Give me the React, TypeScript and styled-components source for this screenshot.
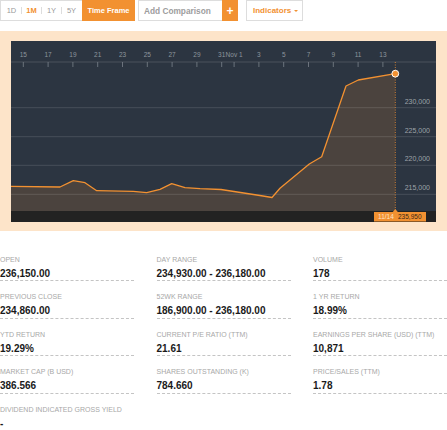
import styled, { createGlobalStyle } from 'styled-components';

const GlobalStyle = createGlobalStyle`
  body {
    margin: 0;
    background: #ffffff;
  }
`;

const ORANGE = '#f29131';

const Page = styled.div`
  width: 447px;
  font-family: 'Liberation Sans', Arial, sans-serif;
`;

const Toolbar = styled.div`
  display: flex;
  align-items: stretch;
  height: 21px;
`;

const RangeGroup = styled.div`
  display: flex;
  align-items: center;
  box-sizing: border-box;
  width: 82px;
  border: 1px solid #dddddd;
  border-right: none;
  padding: 0 1px 0 1px;
`;

const RangeItem = styled.span<{ active?: boolean }>`
  flex: 1;
  text-align: center;
  font-size: 7.5px;
  font-weight: ${(p) => (p.active ? 700 : 400)};
  color: ${(p) => (p.active ? ORANGE : '#9a9a9a')};
  line-height: 7px;
  & + & {
    border-left: 1px solid #dddddd;
  }
`;

const TimeFrame = styled.div`
  display: flex;
  align-items: center;
  justify-content: center;
  width: 53px;
  background: ${ORANGE};
  color: #ffffff;
  font-size: 7.5px;
  font-weight: 700;
`;

const Comparison = styled.div`
  display: flex;
  align-items: center;
  box-sizing: border-box;
  width: 84px;
  margin-left: 3px;
  padding-left: 5px;
  border: 1px solid #dddddd;
  border-right: none;
  color: #9d9d9d;
  font-size: 8.3px;
  font-weight: 700;
`;

const PlusButton = styled.div`
  display: flex;
  align-items: center;
  justify-content: center;
  width: 16px;
  background: ${ORANGE};
  color: #ffffff;
  font-size: 12px;
  font-weight: 700;
`;

const Indicators = styled.div`
  display: flex;
  align-items: center;
  gap: 3px;
  box-sizing: border-box;
  width: 57px;
  margin-left: 8px;
  padding-left: 6px;
  border: 1px solid #dddddd;
  color: ${ORANGE};
  font-size: 8px;
  font-weight: 700;
`;

const Caret = styled.span`
  width: 0;
  height: 0;
  border-left: 2px solid transparent;
  border-right: 2px solid transparent;
  border-top: 2px solid ${ORANGE};
  margin-top: 1px;
`;

const ChartFrame = styled.div`
  margin-top: 10px;
  padding: 10px 11px 9px;
  background: #fde4c9;
`;

const ChartSvg = styled.svg`
  display: block;
  width: 425px;
  height: 181px;
  font-family: 'Liberation Sans', Arial, sans-serif;
`;

const Stats = styled.div`
  display: grid;
  grid-template-columns: repeat(3, 134px);
  column-gap: 22.5px;
  row-gap: 11px;
  margin-top: 24px;
`;

const Stat = styled.div`
  display: flex;
  flex-direction: column;
  gap: 3px;
  border-bottom: 1px dashed #c4c4c4;
`;

const StatLabel = styled.div`
  font-size: 7px;
  line-height: 10px;
  color: #a8a8a8;
  text-transform: uppercase;
  white-space: nowrap;
`;

const StatValue = styled.div`
  font-size: 10px;
  line-height: 12.4px;
  font-weight: 700;
  color: #1a1a1a;
`;

const DAY = 12.4;
const X0 = 12.3;
const xLabels: [number, string][] = [
  [0, '15'], [2, '17'], [4, '19'], [6, '21'], [8, '23'], [10, '25'], [12, '27'],
  [14, '29'], [16, '31'], [17, 'Nov 1'], [19, '3'], [21, '5'], [23, '7'],
  [25, '9'], [27, '11'], [29, '13'],
];

const grid: [number, string][] = [
  [66.7, '230,000'],
  [95.7, '225,000'],
  [124.3, '220,000'],
  [153.3, '215,000'],
];

const points: [number, number][] = [
  [0, 145.3], [49, 146], [62.3, 139.7], [74, 141.7], [85.7, 149.7],
  [122.3, 150.3], [135.7, 151.7], [149, 148.3], [160.7, 142.7], [174, 146.7],
  [189, 147.7], [210, 148.5], [236, 152.5], [252, 155], [261, 156.5],
  [269, 147.3], [298.3, 123], [310.7, 115.7], [335, 45], [347.3, 39], [384.3, 32.7],
];

const PLOT_BOTTOM = 170;
const END_X = X0 + 30 * DAY;

const PriceChart = () => {
  const line = points.map(([x, y], i) => `${i ? 'L' : 'M'}${x} ${y}`).join(' ');
  const area = `${line} L${END_X} ${PLOT_BOTTOM} L0 ${PLOT_BOTTOM} Z`;
  return (
    <ChartSvg viewBox="0 0 425 181">
      <rect x="0" y="0" width="425" height="181" fill="#2c3541" />
      <rect x="0" y={PLOT_BOTTOM} width="425" height="11" fill="#222222" />
      <path d={area} fill="rgba(242,145,49,0.16)" />
      {grid.map(([y, label]) => (
        <g key={label}>
          <line x1="0" x2="425" y1={y} y2={y} stroke="rgba(255,255,255,0.13)" strokeWidth="1" />
          <text x="419" y={y - 4} fontSize="7" fill="#9ea3a8" textAnchor="end">
            {label}
          </text>
        </g>
      ))}
      <line x1="0" x2="425" y1="21" y2="21" stroke="#4a535d" strokeWidth="1" />
      {xLabels.map(([d, label]) => {
        const x = X0 + d * DAY;
        return (
          <g key={label}>
            <line x1={x} x2={x} y1="21" y2="26" stroke="#7b838b" strokeWidth="0.8" />
            <text x={x} y="15.5" fontSize="6.5" fill="#8d959d" textAnchor="middle">
              {label}
            </text>
          </g>
        );
      })}
      <line
        x1={END_X}
        x2={END_X}
        y1="21"
        y2={PLOT_BOTTOM}
        stroke={ORANGE}
        strokeWidth="0.8"
        strokeDasharray="1 1.5"
      />
      <path d={line} fill="none" stroke={ORANGE} strokeWidth="1.3" strokeLinejoin="round" />
      <circle cx={END_X} cy="32.7" r="3.4" fill={ORANGE} stroke="#ffffff" strokeWidth="1" />
      <path d={`M${END_X - 2.5} 171 L${END_X} 168 L${END_X + 2.5} 171 Z`} fill={ORANGE} />
      <rect x="363" y="171" width="52" height="9.5" fill={ORANGE} />
      <text x="367" y="178.3" fontSize="6.5" fill="#fde4c9">
        11/14
      </text>
      <text x="387" y="178.3" fontSize="6.5" fill="#3a2616">
        235,950
      </text>
    </ChartSvg>
  );
};

const stats: [string, string][] = [
  ['Open', '236,150.00'],
  ['Day Range', '234,930.00 - 236,180.00'],
  ['Volume', '178'],
  ['Previous Close', '234,860.00'],
  ['52wk Range', '186,900.00 - 236,180.00'],
  ['1 Yr Return', '18.99%'],
  ['YTD Return', '19.29%'],
  ['Current P/E Ratio (TTM)', '21.61'],
  ['Earnings per Share (USD) (TTM)', '10,871'],
  ['Market Cap (B USD)', '386.566'],
  ['Shares Outstanding (K)', '784.660'],
  ['Price/Sales (TTM)', '1.78'],
  ['Dividend Indicated Gross Yield', '-'],
];

const App = () => {
  return (
    <Page>
      <GlobalStyle />
      <Toolbar>
        <RangeGroup>
          <RangeItem>1D</RangeItem>
          <RangeItem active>1M</RangeItem>
          <RangeItem>1Y</RangeItem>
          <RangeItem>5Y</RangeItem>
        </RangeGroup>
        <TimeFrame>Time Frame</TimeFrame>
        <Comparison>Add Comparison</Comparison>
        <PlusButton>+</PlusButton>
        <Indicators>
          Indicators <Caret />
        </Indicators>
      </Toolbar>
      <ChartFrame>
        <PriceChart />
      </ChartFrame>
      <Stats>
        {stats.map(([label, value]) => (
          <Stat key={label}>
            <StatLabel>{label}</StatLabel>
            <StatValue>{value}</StatValue>
          </Stat>
        ))}
      </Stats>
    </Page>
  );
};

export default App;
